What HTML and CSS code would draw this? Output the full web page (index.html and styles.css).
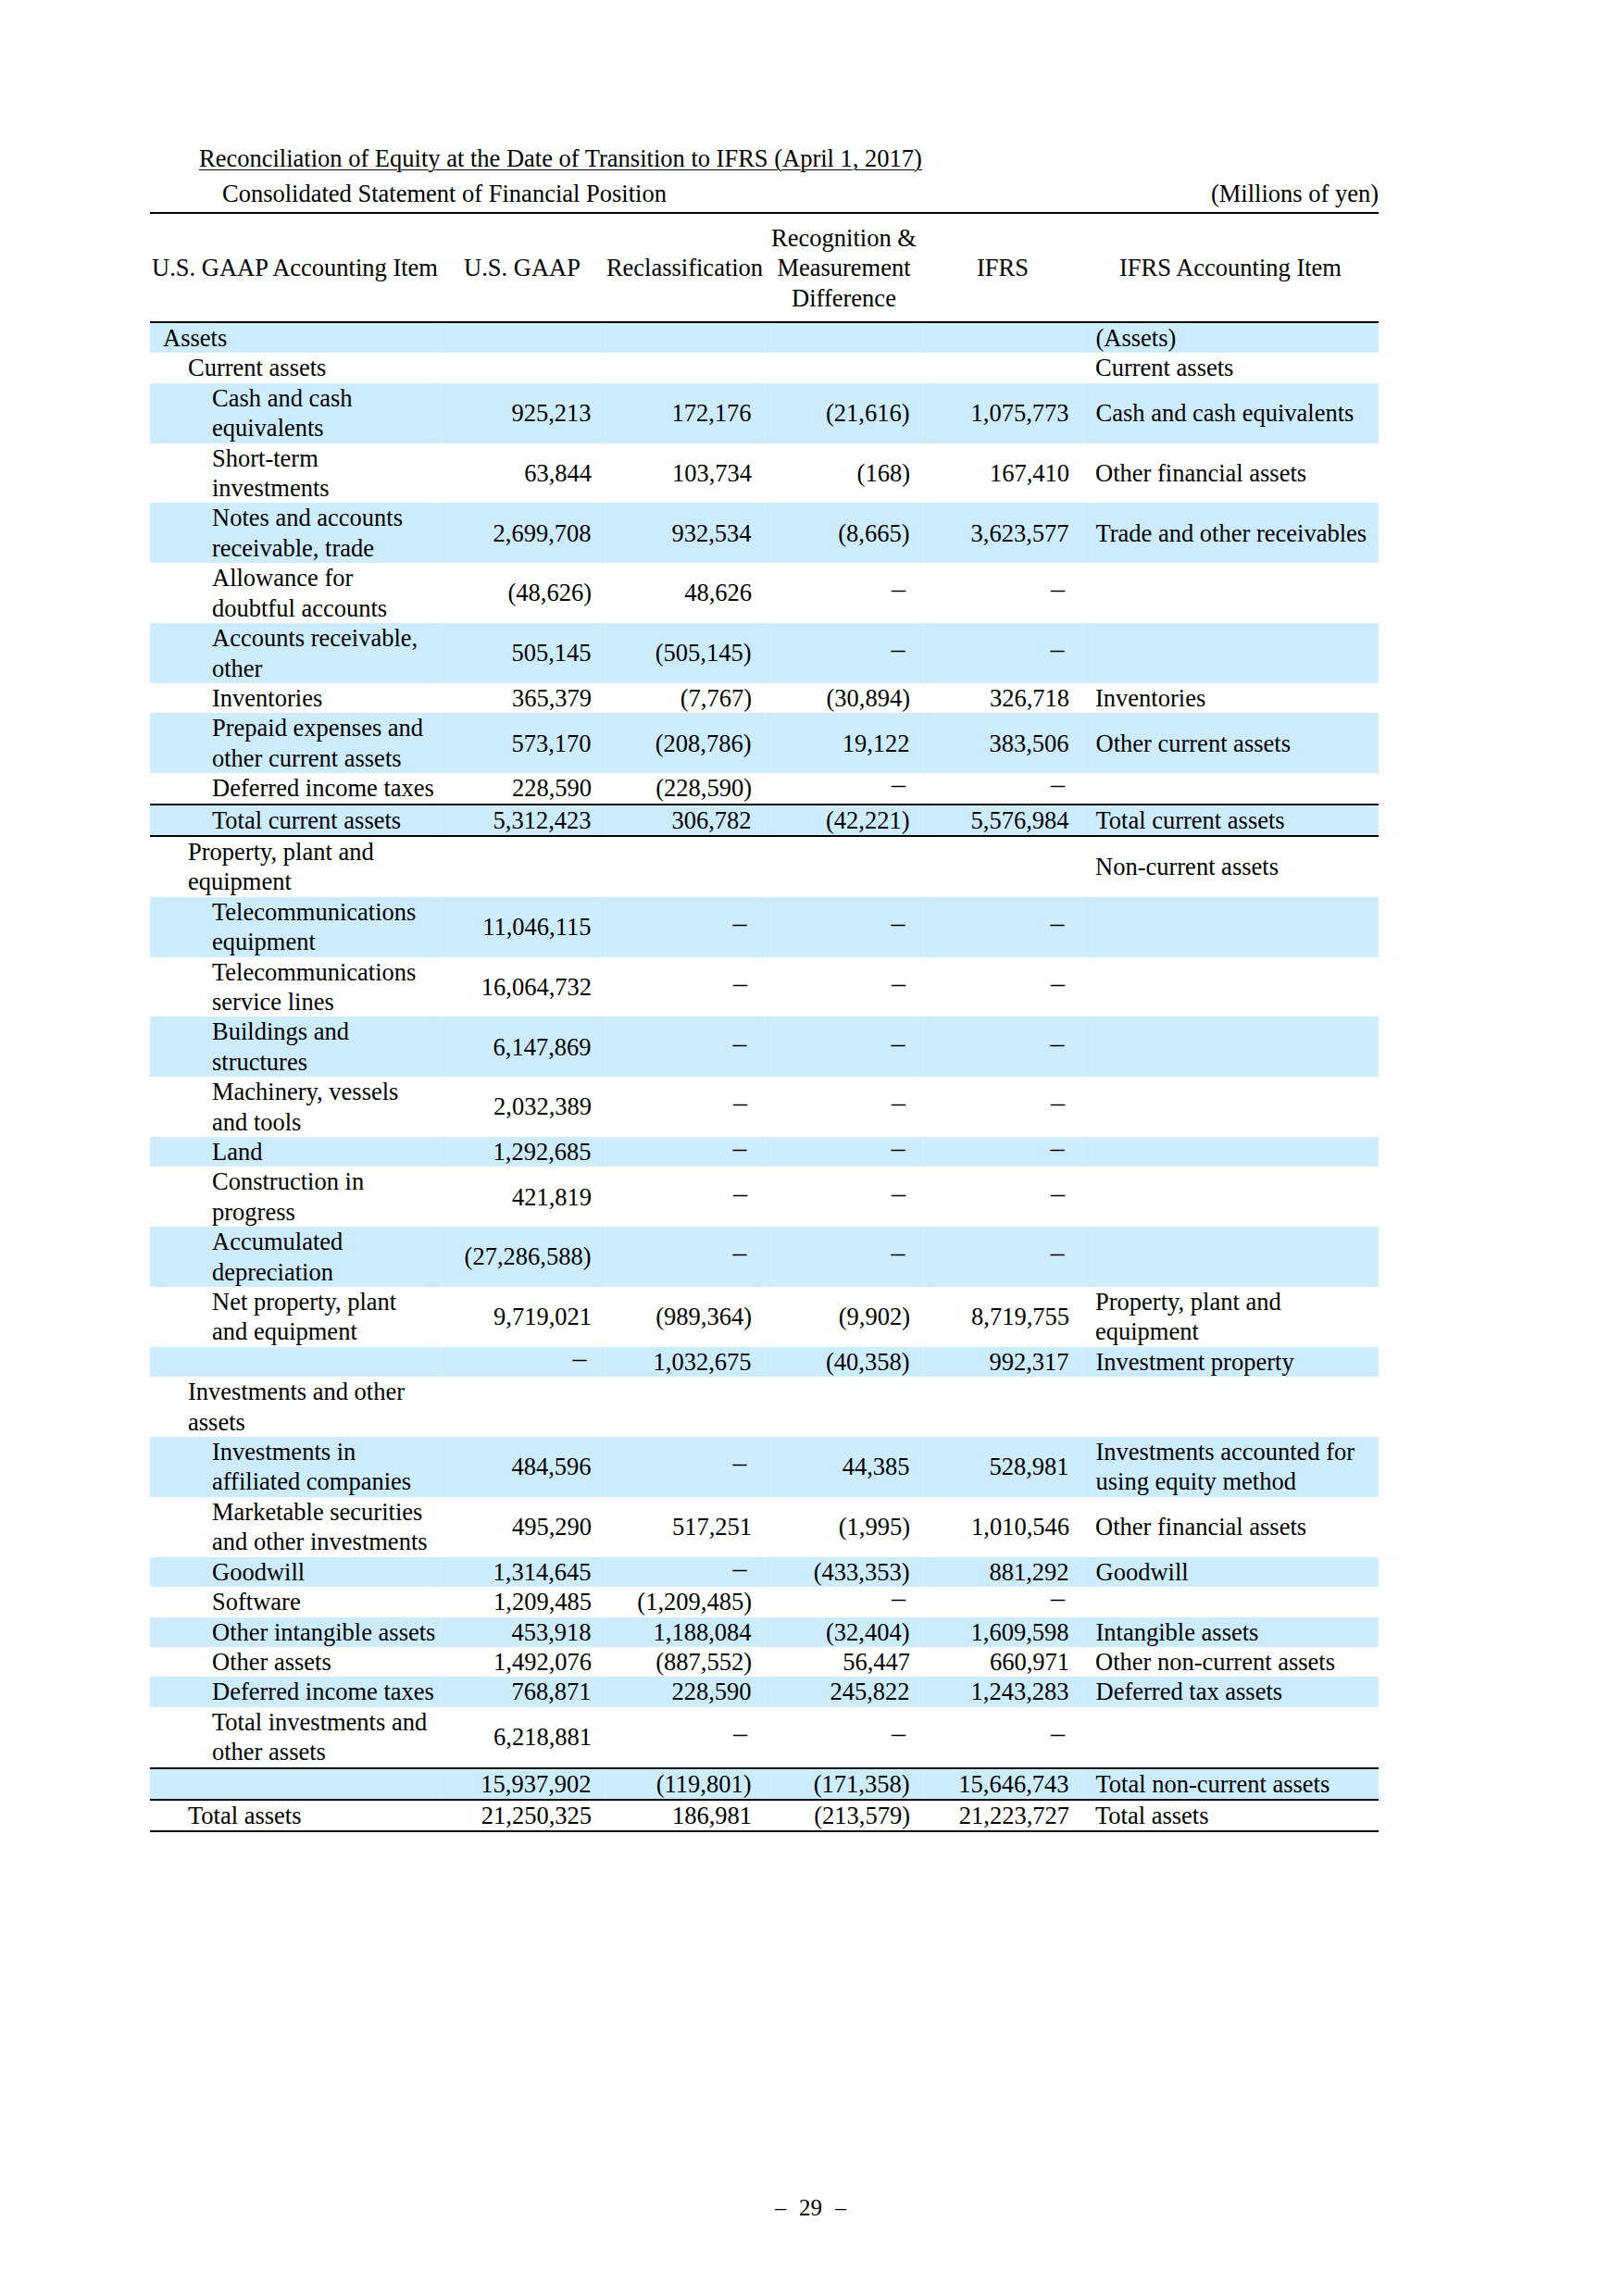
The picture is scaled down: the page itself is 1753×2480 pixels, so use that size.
FILE: index.html
```html
<!DOCTYPE html>
<html lang="en">
<head>
<meta charset="utf-8">
<title>Reconciliation of Equity at the Date of Transition to IFRS</title>
<link rel="stylesheet" href="styles.css">
</head>
<body>
<div class="page">
  <div class="heading">
    <div class="title">Reconciliation of Equity at the Date of Transition to IFRS (April 1, 2017)</div>
    <div class="subhead">
      <span class="subtitle">Consolidated Statement of Financial Position</span>
      <span class="unit">(Millions of yen)</span>
    </div>
  </div>
  <table class="recon">
    <colgroup>
      <col class="c-item"><col class="c-num1"><col class="c-num2"><col class="c-num3"><col class="c-num4"><col class="c-ifrs">
    </colgroup>
    <thead>
      <tr>
        <th>U.S. GAAP Accounting Item</th>
        <th>U.S. GAAP</th>
        <th>Reclassification</th>
        <th>Recognition &amp;<br>Measurement<br>Difference</th>
        <th>IFRS</th>
        <th>IFRS Accounting Item</th>
      </tr>
    </thead>
    <tbody>
      <tr class="s"><td class="item l1">Assets</td><td class="num"></td><td class="num"></td><td class="num"></td><td class="num"></td><td class="ifrs">(Assets)</td></tr>
      <tr><td class="item l2">Current assets</td><td class="num"></td><td class="num"></td><td class="num"></td><td class="num"></td><td class="ifrs">Current assets</td></tr>
      <tr class="s"><td class="item l3">Cash and cash<br>equivalents</td><td class="num">925,213</td><td class="num">172,176</td><td class="num">(21,616)</td><td class="num">1,075,773</td><td class="ifrs">Cash and cash equivalents</td></tr>
      <tr><td class="item l3">Short-term<br>investments</td><td class="num">63,844</td><td class="num">103,734</td><td class="num">(168)</td><td class="num">167,410</td><td class="ifrs">Other financial assets</td></tr>
      <tr class="s"><td class="item l3">Notes and accounts<br>receivable, trade</td><td class="num">2,699,708</td><td class="num">932,534</td><td class="num">(8,665)</td><td class="num">3,623,577</td><td class="ifrs">Trade and other receivables</td></tr>
      <tr><td class="item l3">Allowance for<br>doubtful accounts</td><td class="num">(48,626)</td><td class="num">48,626</td><td class="num"><span class="nil">–</span></td><td class="num"><span class="nil">–</span></td><td class="ifrs"></td></tr>
      <tr class="s"><td class="item l3">Accounts receivable,<br>other</td><td class="num">505,145</td><td class="num">(505,145)</td><td class="num"><span class="nil">–</span></td><td class="num"><span class="nil">–</span></td><td class="ifrs"></td></tr>
      <tr><td class="item l3">Inventories</td><td class="num">365,379</td><td class="num">(7,767)</td><td class="num">(30,894)</td><td class="num">326,718</td><td class="ifrs">Inventories</td></tr>
      <tr class="s"><td class="item l3">Prepaid expenses and<br>other current assets</td><td class="num">573,170</td><td class="num">(208,786)</td><td class="num">19,122</td><td class="num">383,506</td><td class="ifrs">Other current assets</td></tr>
      <tr><td class="item l3">Deferred income taxes</td><td class="num">228,590</td><td class="num">(228,590)</td><td class="num"><span class="nil">–</span></td><td class="num"><span class="nil">–</span></td><td class="ifrs"></td></tr>
      <tr class="s total"><td class="item l3">Total current assets</td><td class="num">5,312,423</td><td class="num">306,782</td><td class="num">(42,221)</td><td class="num">5,576,984</td><td class="ifrs">Total current assets</td></tr>
      <tr><td class="item l2">Property, plant and<br>equipment</td><td class="num"></td><td class="num"></td><td class="num"></td><td class="num"></td><td class="ifrs">Non-current assets</td></tr>
      <tr class="s"><td class="item l3">Telecommunications<br>equipment</td><td class="num">11,046,115</td><td class="num"><span class="nil">–</span></td><td class="num"><span class="nil">–</span></td><td class="num"><span class="nil">–</span></td><td class="ifrs"></td></tr>
      <tr><td class="item l3">Telecommunications<br>service lines</td><td class="num">16,064,732</td><td class="num"><span class="nil">–</span></td><td class="num"><span class="nil">–</span></td><td class="num"><span class="nil">–</span></td><td class="ifrs"></td></tr>
      <tr class="s"><td class="item l3">Buildings and<br>structures</td><td class="num">6,147,869</td><td class="num"><span class="nil">–</span></td><td class="num"><span class="nil">–</span></td><td class="num"><span class="nil">–</span></td><td class="ifrs"></td></tr>
      <tr><td class="item l3">Machinery, vessels<br>and tools</td><td class="num">2,032,389</td><td class="num"><span class="nil">–</span></td><td class="num"><span class="nil">–</span></td><td class="num"><span class="nil">–</span></td><td class="ifrs"></td></tr>
      <tr class="s"><td class="item l3">Land</td><td class="num">1,292,685</td><td class="num"><span class="nil">–</span></td><td class="num"><span class="nil">–</span></td><td class="num"><span class="nil">–</span></td><td class="ifrs"></td></tr>
      <tr><td class="item l3">Construction in<br>progress</td><td class="num">421,819</td><td class="num"><span class="nil">–</span></td><td class="num"><span class="nil">–</span></td><td class="num"><span class="nil">–</span></td><td class="ifrs"></td></tr>
      <tr class="s"><td class="item l3">Accumulated<br>depreciation</td><td class="num">(27,286,588)</td><td class="num"><span class="nil">–</span></td><td class="num"><span class="nil">–</span></td><td class="num"><span class="nil">–</span></td><td class="ifrs"></td></tr>
      <tr><td class="item l3">Net property, plant<br>and equipment</td><td class="num">9,719,021</td><td class="num">(989,364)</td><td class="num">(9,902)</td><td class="num">8,719,755</td><td class="ifrs">Property, plant and<br>equipment</td></tr>
      <tr class="s"><td class="item l3"></td><td class="num"><span class="nil">–</span></td><td class="num">1,032,675</td><td class="num">(40,358)</td><td class="num">992,317</td><td class="ifrs">Investment property</td></tr>
      <tr><td class="item l2">Investments and other<br>assets</td><td class="num"></td><td class="num"></td><td class="num"></td><td class="num"></td><td class="ifrs"></td></tr>
      <tr class="s"><td class="item l3">Investments in<br>affiliated companies</td><td class="num">484,596</td><td class="num"><span class="nil">–</span></td><td class="num">44,385</td><td class="num">528,981</td><td class="ifrs">Investments accounted for<br>using equity method</td></tr>
      <tr><td class="item l3">Marketable securities<br>and other investments</td><td class="num">495,290</td><td class="num">517,251</td><td class="num">(1,995)</td><td class="num">1,010,546</td><td class="ifrs">Other financial assets</td></tr>
      <tr class="s"><td class="item l3">Goodwill</td><td class="num">1,314,645</td><td class="num"><span class="nil">–</span></td><td class="num">(433,353)</td><td class="num">881,292</td><td class="ifrs">Goodwill</td></tr>
      <tr><td class="item l3">Software</td><td class="num">1,209,485</td><td class="num">(1,209,485)</td><td class="num"><span class="nil">–</span></td><td class="num"><span class="nil">–</span></td><td class="ifrs"></td></tr>
      <tr class="s"><td class="item l3">Other intangible assets</td><td class="num">453,918</td><td class="num">1,188,084</td><td class="num">(32,404)</td><td class="num">1,609,598</td><td class="ifrs">Intangible assets</td></tr>
      <tr><td class="item l3">Other assets</td><td class="num">1,492,076</td><td class="num">(887,552)</td><td class="num">56,447</td><td class="num">660,971</td><td class="ifrs">Other non-current assets</td></tr>
      <tr class="s"><td class="item l3">Deferred income taxes</td><td class="num">768,871</td><td class="num">228,590</td><td class="num">245,822</td><td class="num">1,243,283</td><td class="ifrs">Deferred tax assets</td></tr>
      <tr><td class="item l3">Total investments and<br>other assets</td><td class="num">6,218,881</td><td class="num"><span class="nil">–</span></td><td class="num"><span class="nil">–</span></td><td class="num"><span class="nil">–</span></td><td class="ifrs"></td></tr>
      <tr class="s total"><td class="item l3"></td><td class="num">15,937,902</td><td class="num">(119,801)</td><td class="num">(171,358)</td><td class="num">15,646,743</td><td class="ifrs">Total non-current assets</td></tr>
      <tr class="grand"><td class="item l2">Total assets</td><td class="num">21,250,325</td><td class="num">186,981</td><td class="num">(213,579)</td><td class="num">21,223,727</td><td class="ifrs">Total assets</td></tr>
    </tbody>
  </table>
  <div class="folio"><span class="fdash">–</span>29<span class="fdash">–</span></div>
</div>
</body>
</html>
```
FILE: styles.css
```css
html, body {
  margin: 0;
  padding: 0;
  background: #ffffff;
}

.page {
  width: 1753px;
  height: 2480px;
  box-sizing: border-box;
  padding: 155px 0 0 162px;
  font-family: "Liberation Serif", "Times New Roman", serif;
  font-size: 26.5px;
  line-height: 32.4px;
  color: #000;
}

.heading {
  width: 1327px;
}

.title {
  padding-left: 53px;
  text-decoration: underline;
  text-decoration-thickness: 1px;
  text-underline-offset: 3px;
}

.subhead {
  display: flex;
  justify-content: space-between;
  margin-top: 6px;
  margin-bottom: 3px;
}

.subtitle {
  padding-left: 78px;
}

.recon {
  width: 1327px;
  border-collapse: collapse;
  table-layout: fixed;
}

.c-item { width: 313px; }
.c-num1 { width: 178px; }
.c-num2 { width: 173px; }
.c-num3 { width: 171px; }
.c-num4 { width: 172px; }
.c-ifrs { width: 320px; }

.recon th {
  font-weight: normal;
  text-align: center;
  vertical-align: middle;
  padding: 10px 0 9px;
  border-top: 2px solid #000;
  border-bottom: 2px solid #000;
  white-space: nowrap;
}

.recon td {
  padding: 0;
  height: 32.4px;
  vertical-align: middle;
  white-space: nowrap;
}

.recon tr.s td {
  background: #cdecfe;
}

.recon tr.s td + td {
  border-left: 1px solid #dbf2ff;
}

.item.l1 { padding-left: 14px; }
.item.l2 { padding-left: 41px; }
.item.l3 { padding-left: 67px; }

.num {
  text-align: right;
  padding-right: 14px !important;
}

.nil {
  font-size: 30px;
  line-height: 0;
  margin-right: 5px;
  position: relative;
  top: -3px;
}

.ifrs {
  padding-left: 14px !important;
}

.recon tr.total td {
  border-top: 2px solid #000;
  border-bottom: 2px solid #000;
}

.recon tr.grand td {
  border-bottom: 2px solid #000;
}

.folio {
  width: 1427px;
  display: flex;
  justify-content: center;
  align-items: baseline;
  gap: 14px;
  margin-top: 390px;
  font-size: 25px;
}

.fdash {
  font-size: 24px;
  position: relative;
  top: -1px;
}
```
